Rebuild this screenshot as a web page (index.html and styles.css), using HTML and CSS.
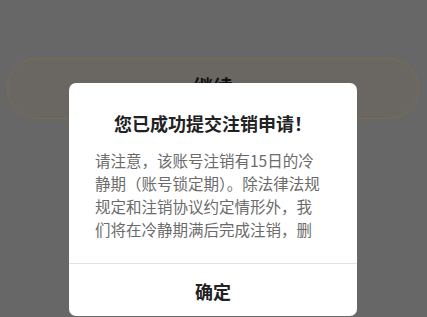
FILE: index.html
```html
<!DOCTYPE html>
<html lang="zh-CN">
<head>
<meta charset="utf-8">
<link rel="stylesheet" href="styles.css">
</head>
<body>
<div class="page">
  <div class="continue-btn">继续</div>
</div>
<div class="dialog">
  <div class="dialog-title">您已成功提交注销申请！</div>
  <div class="dialog-body">
    <div class="dialog-scroll">
      <p class="dialog-text">请注意，该账号注销有15日的冷<br>静期（账号锁定期）。除法律法规<br>规定和注销协议约定情形外，我<br>们将在冷静期满后完成注销，删</p>
    </div>
  </div>
  <div class="dialog-actions">
    <div class="dialog-ok">确定</div>
  </div>
</div>
</body>
</html>
```
FILE: styles.css
```css
html, body {
  margin: 0;
  padding: 0;
}
body {
  width: 427px;
  height: 317px;
  overflow: hidden;
  background: #676767;
  font-family: "Noto Sans CJK SC", "Noto Sans", sans-serif;
}
.page {
  padding: 58px 8px 0 7px;
}
.continue-btn {
  height: 59px;
  border: 1.5px solid #7b6c4e;
  border-radius: 32px;
  background: #6a6763;
  color: #111;
  font-size: 20px;
  font-weight: 700;
  line-height: 56px;
  text-align: center;
}
.dialog {
  position: absolute;
  left: 69px;
  top: 83px;
  width: 288px;
  height: 233px;
  background: #fff;
  border-radius: 7px;
  display: flex;
  flex-direction: column;
  overflow: hidden;
}
.dialog-title {
  padding-top: 28px;
  font-size: 18px;
  line-height: 24px;
  font-weight: 700;
  color: #222;
  text-align: center;
}
.dialog-body {
  padding: 14px 0 22px 26px;
}
.dialog-scroll {
  height: 92px;
  overflow: hidden;
}
.dialog-text {
  margin: 0;
  font-size: 15.5px;
  line-height: 23px;
  color: #6b6b6b;
  white-space: nowrap;
}
.dialog-actions {
  border-top: 1px solid #e3e3e3;
  flex: 1;
}
.dialog-ok {
  padding-top: 4px;
  line-height: 47px;
  font-size: 18px;
  font-weight: 700;
  color: #222;
  text-align: center;
}
```
